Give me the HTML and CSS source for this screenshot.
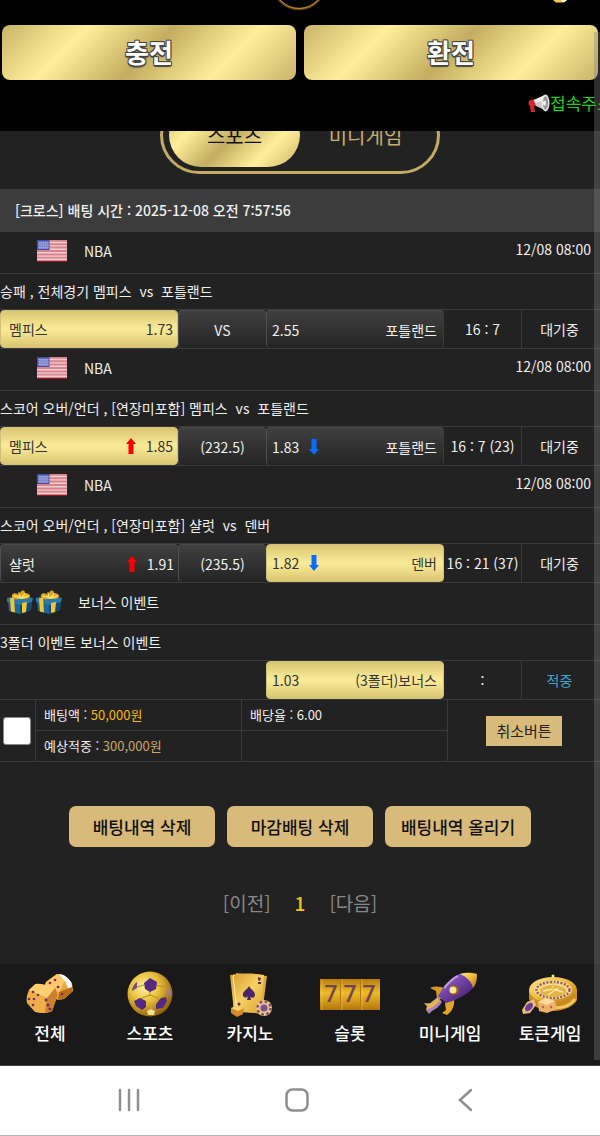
FILE: index.html
```html
<!DOCTYPE html>
<html lang="ko">

<head>
    <meta charset="UTF-8">
    <meta name="viewport" content="width=device-width, initial-scale=1.0">
    <title>배팅내역</title>
    <link rel="stylesheet" href="styles.css">
</head>

<body>
    <svg class="defs" aria-hidden="true">
        <defs>
            <linearGradient id="gold" x1="0" y1="0" x2="1" y2="1">
                <stop offset="0" stop-color="#ffe58a"/>
                <stop offset=".5" stop-color="#efb93a"/>
                <stop offset="1" stop-color="#b56f12"/>
            </linearGradient>
            <linearGradient id="cardGold" x1="0" y1="0" x2="1" y2="1">
                <stop offset="0" stop-color="#d9982c"/>
                <stop offset=".5" stop-color="#f6d063"/>
                <stop offset="1" stop-color="#dca336"/>
            </linearGradient>
            <radialGradient id="ballGold" cx=".38" cy=".35" r=".7">
                <stop offset="0" stop-color="#fff3a8"/>
                <stop offset=".45" stop-color="#e9c23c"/>
                <stop offset="1" stop-color="#8c5a08"/>
            </radialGradient>
            <linearGradient id="reel" x1="0" y1="0" x2="0" y2="1">
                <stop offset="0" stop-color="#b87c0c"/>
                <stop offset=".45" stop-color="#edbb28"/>
                <stop offset="1" stop-color="#b4760c"/>
            </linearGradient>
            <linearGradient id="violet" x1="0" y1="0" x2="1" y2="1">
                <stop offset="0" stop-color="#a673d6"/>
                <stop offset=".5" stop-color="#6a3c9e"/>
                <stop offset="1" stop-color="#35195c"/>
            </linearGradient>
            <symbol id="flag" viewBox="0 0 30 22">
                <rect width="30" height="22" fill="#d9828c"/>
                <path d="M0 2.500h30M0 5.900h30M0 9.300h30M0 12.700h30M0 16.100h30M0 19.300h30" stroke="#f0cdd1" stroke-width="1.400"/>
                <path d="M0 21.500h30" stroke="#8e1722"/>
                <rect width="12.500" height="10" fill="#4450a8"/>
                <rect x="1.500" y="1.500" width="10" height="7.500" fill="#8289cb"/>
                <path d="M1.500 2.500h10M1.500 5h10M1.500 7.500h10" stroke="#a6addb" stroke-dasharray="1.400 .8"/>
            </symbol>
            <symbol id="gift" viewBox="0 0 28 24">
                <path d="M2 10l24-1-1 11-11 4L3 21z" fill="#1c6699"/>
                <path d="M14 12l12-3-1 11-11 4z" fill="#124a75"/>
                <path d="M1 8l12-3 14 3-1 4-12 3L1 12z" fill="#2a7aa9"/>
                <path d="M4 8.500l4-1 1 15-4-1zM16 13l5-1-1 10-4 1z" fill="#f5c62f"/>
                <path d="M13 9C8 10 5 8 6 5s6-2 8 1C13 0 19-1 19 3c6 0 7 5 1 6z" fill="#e5a31e"/>
                <path d="M8 6l5 1M13 3l1 5M19 4l-4 4M22 6l-6 2" stroke="#ffe36b" stroke-width="1.400" stroke-linecap="round"/>
            </symbol>
            <symbol id="up" viewBox="0 0 10 16">
                <path d="M5 0l5 6H7.500v10h-5V6H0z" fill="#f00"/>
            </symbol>
            <symbol id="down" viewBox="0 0 10 16">
                <path d="M5 16l5-6H7.500V0h-5v10H0z" fill="#0a6cff"/>
            </symbol>
        </defs>
    </svg>

    <header class="header">
        <div class="logoBar">
            <svg class="logo" viewBox="0 0 50 25" aria-hidden="true">
                <circle cx="24" cy="-17" r="26" fill="none" stroke="#6b4714" stroke-width="2.500"/>
                <circle cx="24" cy="-17" r="25.500" fill="none" stroke="#c08a3c"/>
            </svg>
            <svg class="coin" viewBox="0 0 14 25" aria-hidden="true">
                <path d="M0 0h14l-3 2.500H3z" fill="#f5c94d"/>
                <path d="M9 0h5l-3 2H9z" fill="#fff"/>
            </svg>
        </div>
        <div class="money">
            <button type="button">충전</button>
            <button type="button">환전</button>
        </div>
        <div class="notice">
            <svg viewBox="0 0 22 20" aria-hidden="true">
                <path d="M2 7l6-1 1 7H6l1 6H3L2 13C0 12 0 8 2 7z" fill="#d8232a"/>
                <path d="M6 7L17 2l2 16-11-5z" fill="#c9c9c9"/>
                <path d="M6 7L17 2v5L7 10z" fill="#efefef"/>
                <ellipse cx="17.500" cy="10" rx="4" ry="8.500" fill="#e6e6e6"/>
                <ellipse cx="17.500" cy="10" rx="2.600" ry="6.800" fill="#9b9b9b"/>
                <ellipse cx="16.500" cy="10" rx="1.500" ry="2.500" fill="#eee"/>
            </svg>
            <span>접속주소</span>
        </div>
    </header>

    <main class="main">
        <div class="tabs">
            <button type="button" class="active">스포츠</button>
            <button type="button">미니게임</button>
        </div>

        <h1 class="betTime">[크로스] 배팅 시간 : 2025-12-08 오전 7:57:56</h1>

        <table class="bets">
            <colgroup>
                <col>
                <col class="colLine">
                <col>
                <col class="colScore">
                <col class="colScore">
            </colgroup>
            <tbody>
                <tr class="league">
                    <td colspan="5">
                        <div class="leagueRow">
                            <svg class="flag" aria-hidden="true"><use href="#flag"/></svg>
                            <span>NBA</span>
                            <time>12/08 08:00</time>
                        </div>
                    </td>
                </tr>
                <tr class="match">
                    <td colspan="5">승패 , 전체경기 멤피스 &nbsp;vs&nbsp; 포틀랜드</td>
                </tr>
                <tr class="odds">
                    <td><div class="odd picked"><span>멤피스</span><b>1.73</b></div></td>
                    <td><div class="odd line">VS</div></td>
                    <td><div class="odd away"><b>2.55</b><span>포틀랜드</span></div></td>
                    <td>16 : 7</td>
                    <td>대기중</td>
                </tr>
                <tr class="league">
                    <td colspan="5">
                        <div class="leagueRow">
                            <svg class="flag" aria-hidden="true"><use href="#flag"/></svg>
                            <span>NBA</span>
                            <time>12/08 08:00</time>
                        </div>
                    </td>
                </tr>
                <tr class="match">
                    <td colspan="5">스코어 오버/언더 , [연장미포함] 멤피스 &nbsp;vs&nbsp; 포틀랜드</td>
                </tr>
                <tr class="odds">
                    <td><div class="odd picked"><span>멤피스</span><svg class="arrow" aria-hidden="true"><use href="#up"/></svg><b>1.85</b></div></td>
                    <td><div class="odd line">(232.5)</div></td>
                    <td><div class="odd away"><b>1.83</b><svg class="arrow" aria-hidden="true"><use href="#down"/></svg><span>포틀랜드</span></div></td>
                    <td>16 : 7 (23)</td>
                    <td>대기중</td>
                </tr>
                <tr class="league">
                    <td colspan="5">
                        <div class="leagueRow">
                            <svg class="flag" aria-hidden="true"><use href="#flag"/></svg>
                            <span>NBA</span>
                            <time>12/08 08:00</time>
                        </div>
                    </td>
                </tr>
                <tr class="match">
                    <td colspan="5">스코어 오버/언더 , [연장미포함] 샬럿 &nbsp;vs&nbsp; 덴버</td>
                </tr>
                <tr class="odds">
                    <td><div class="odd"><span>샬럿</span><svg class="arrow" aria-hidden="true"><use href="#up"/></svg><b>1.91</b></div></td>
                    <td><div class="odd line">(235.5)</div></td>
                    <td><div class="odd away picked"><b>1.82</b><svg class="arrow" aria-hidden="true"><use href="#down"/></svg><span>덴버</span></div></td>
                    <td>16 : 21 (37)</td>
                    <td>대기중</td>
                </tr>
                <tr class="league">
                    <td colspan="5">
                        <div class="leagueRow bonus">
                            <svg class="gift" aria-hidden="true"><use href="#gift"/></svg>
                            <svg class="gift" aria-hidden="true"><use href="#gift"/></svg>
                            <span>보너스 이벤트</span>
                        </div>
                    </td>
                </tr>
                <tr class="match">
                    <td colspan="5">3폴더 이벤트 보너스 이벤트</td>
                </tr>
                <tr class="odds">
                    <td colspan="2"></td>
                    <td><div class="odd away picked"><b>1.03</b><span>(3폴더)보너스</span></div></td>
                    <td>:</td>
                    <td class="win">적중</td>
                </tr>
            </tbody>
        </table>

        <table class="summary">
            <colgroup>
                <col class="colCheck">
                <col>
                <col>
                <col class="colCancel">
            </colgroup>
            <tbody>
                <tr>
                    <td rowspan="2" class="check"><input type="checkbox" aria-label="배팅 선택"></td>
                    <td>배팅액 : <span class="amount">50,000원</span></td>
                    <td>배당율 : 6.00</td>
                    <td rowspan="2" class="cancel"><button type="button">취소버튼</button></td>
                </tr>
                <tr>
                    <td>예상적중 : <span class="expect">300,000원</span></td>
                    <td></td>
                </tr>
            </tbody>
        </table>

        <div class="actions">
            <button type="button">배팅내역 삭제</button>
            <button type="button">마감배팅 삭제</button>
            <button type="button">배팅내역 올리기</button>
        </div>

        <nav class="paging" aria-label="페이지">
            <a href="#">[이전]</a>
            <a href="#" class="active">1</a>
            <a href="#">[다음]</a>
        </nav>
    </main>

    <nav class="menu" aria-label="메뉴">
        <a href="#">
            <svg viewBox="0 0 60 48" aria-hidden="true">
                <path d="M37 4L26 12l-2 11 14 7 6-1 9-8-1-8-8-8z" fill="#eda63f"/>
                <path d="M37 4L26 12l-1 3 14 8 6-13z" fill="#ffc768"/>
                <path d="M38 4c5 0 10 3 13 8l1 5-4 2c-1-6-5-11-10-15z" fill="#fff"/>
                <path d="M39 22l13-5v5l-9 7-5 1z" fill="#b96c1c"/>
                <path d="M15 14c6 0 14 2 20 4 2 3 3 6 2 9l-5 14c-5 3-13 2-17 1L7 33c-1-4 0-9 2-13z" fill="#f0ae4a"/>
                <path d="M16 14c6-1 13 2 19 4l-7 10L9 20z" fill="#ffd071"/>
                <path d="M27 28l8-10c2 3 3 6 2 9l-5 14-7 2z" fill="#cc7f2c"/>
                <g fill="#6b2f63">
                    <circle cx="13" cy="22" r="1.300"/>
                    <circle cx="18" cy="25" r="1.300"/>
                    <circle cx="9" cy="29" r="1.300"/>
                    <circle cx="14" cy="29" r="1.300"/>
                    <circle cx="13" cy="35" r="1.300"/>
                    <circle cx="26" cy="30" r="1.500"/>
                    <circle cx="28" cy="35" r="1.500"/>
                    <circle cx="30" cy="39" r="1.500"/>
                    <circle cx="35" cy="10" r="1.300"/>
                    <circle cx="30" cy="13" r="1.300"/>
                    <circle cx="38" cy="17" r="1.300"/>
                    <circle cx="42" cy="24" r="1.200"/>
                </g>
            </svg>
            <span>전체</span>
        </a>
        <a href="#">
            <svg viewBox="0 0 60 48" aria-hidden="true">
                <circle cx="30" cy="24" r="22.500" fill="url(#ballGold)"/>
                <path d="M30 20v6M22 28l8-3 8 3M22 28l-2 4M38 28l2 4M17 17l7-2M43 17l-7-2" fill="none" stroke="#b98a1a"/>
                <path d="M24 13l6-5 7 4-1 7-6 3-5-3z" fill="#542a80"/>
                <path d="M12 21c0-4 3-8 5-9l0 6z" fill="#7a4b8e"/>
                <path d="M14 31l6-3 6 3 0 6-4 3-6-4z" fill="#542a80"/>
                <path d="M36 34l5-6 5-1 1 4-4 7-7 1z" fill="#542a80"/>
                <path d="M47 17c3 1 4 5 4 9l-3-2z" fill="#a07aa0"/>
                <path d="M27 41l4-2 4 2-1 4h-6z" fill="#f4dc9a"/>
            </svg>
            <span>스포츠</span>
        </a>
        <a href="#">
            <svg viewBox="0 0 60 48" aria-hidden="true">
                <path d="M16 3l31 3-5 38-29-4z" fill="#d9a843"/>
                <path d="M10 5c11-2 22-2 34 0l-3 37c-8 1-16 1-27-1z" fill="url(#cardGold)"/>
                <path d="M15 5l-2 1 4 34" fill="none" stroke="#fff0ae"/>
                <path d="M29 16c2 4 6 5 6 9 0 3-4 4-5 1l1 4h-4l1-4c-2 3-6 1-5-2 0-3 5-5 6-8z" fill="#4c2467"/>
                <path d="M38 7l3 1-1 3-2-1zM38 12h3v2h-3z" fill="#5a3158"/>
                <path d="M11 38l6-2 7 2-1 6-6 3-6-4z" fill="#d78b27"/>
                <path d="M11 38l6-2 7 2-6 3z" fill="#ffd178"/>
                <circle cx="19" cy="34" r="1.500" fill="#672e55"/>
                <circle cx="44" cy="38" r="8" fill="#f1c577"/>
                <circle cx="44" cy="38" r="6.500" fill="none" stroke="#7c4b82" stroke-width="2.500" stroke-dasharray="2.500 2.600"/>
                <circle cx="44" cy="38" r="5" fill="#e8c08d"/>
                <circle cx="44" cy="38" r="3.500" fill="#775092"/>
            </svg>
            <span>카지노</span>
        </a>
        <a href="#">
            <svg viewBox="0 0 60 48" aria-hidden="true">
                <rect y="9" width="60" height="31" fill="url(#reel)"/>
                <path d="M20.500 9v31M40.500 9v31" stroke="#b07a10"/>
                <path d="M2 9v31M22 9v31M42 9v31" stroke="#ffe36c" opacity=".4"/>
                <g class="seven" text-anchor="middle">
                    <text x="11" y="32">7</text>
                    <text x="30" y="32">7</text>
                    <text x="49" y="32">7</text>
                </g>
            </svg>
            <span>슬롯</span>
        </a>
        <a href="#">
            <svg viewBox="0 0 60 48" aria-hidden="true">
                <path d="M25 19c-5-3-10-3-15-1l6 3 1 8 6 0z" fill="#d39a2b"/>
                <path d="M34 28c1 6-1 13-7 17l-5-2 4-3-1-7z" fill="#e5a52d"/>
                <path d="M18 27l4 5c-2 4-6 7-10 9l-3 3-3-4 2-3-3-3 5-1z" fill="#a883b8"/>
                <path d="M17 28l3 3-7 6-7 3 1-4-3-3 6 1z" fill="#e8b650"/>
                <path d="M39 4c6-1 12-1 18 0 0 6-1 11-4 14-7 7-16 12-27 15l-8-7c5-9 12-17 21-22z" fill="url(#violet)"/>
                <path d="M40 4c6-2 12-1 17 0 0 6-1 10-4 14C52 12 47 7 40 4z" fill="url(#gold)"/>
                <path d="M24 18c5-6 9-10 14-12" fill="none" stroke="#c49be5" stroke-width="2"/>
                <circle cx="34" cy="20" r="5" fill="#9a5e18"/>
                <circle cx="33" cy="20" r="3.500" fill="#fbe7a0"/>
            </svg>
            <span>미니게임</span>
        </a>
        <a href="#">
            <svg viewBox="0 0 60 48" aria-hidden="true">
                <path d="M9 20v9c4 8 12 12 24 12s22-6 24-11V20z" fill="#c78a25"/>
                <path d="M34 38c10 0 17-3 21-9" fill="none" stroke="#f3c75c" stroke-width="3"/>
                <ellipse cx="33" cy="20" rx="24" ry="13" fill="url(#gold)"/>
                <ellipse cx="33" cy="20" rx="19" ry="9.500" fill="#f7dc8b"/>
                <ellipse cx="33" cy="20" rx="16.500" ry="8" fill="none" stroke="#96596a" stroke-width="2.500" stroke-dasharray="2 1.500"/>
                <ellipse cx="33" cy="21" rx="13" ry="6" fill="#e2b347"/>
                <path d="M23 21l10-2 10 3M28 25l10-7" fill="none" stroke="#ffeaa0" stroke-width="1.500"/>
                <path d="M32 20V7h2v13z" fill="#f1ca5b"/>
                <circle cx="33" cy="6" r="1.500" fill="#ffe48b"/>
                <path d="M18 32l8-4 9 3 2 8-10 4-8-2z" fill="#efb267"/>
                <path d="M18 32l8-4 9 3-8 4z" fill="#ffdba0"/>
                <path d="M2 40l5-8 7-3 2 6-6 8-7 1z" fill="#e9bd79"/>
                <ellipse cx="9" cy="37" rx="3" ry="5" fill="#6c3d98" transform="rotate(40 9 37)"/>
                <circle cx="23" cy="37" r="1.200" fill="#b06a55"/>
                <circle cx="31" cy="37" r="1.200" fill="#b06a55"/>
            </svg>
            <span>토큰게임</span>
        </a>
    </nav>

    <footer class="system">
        <button type="button" aria-label="최근 앱">
            <svg viewBox="0 0 24 24"><path d="M3 2v20M12 2v20M21 2v20" stroke-width="2.500"/></svg>
        </button>
        <button type="button" aria-label="홈">
            <svg viewBox="0 0 24 24"><rect x="1.500" y="1.500" width="21" height="21" rx="6" stroke-width="2.500"/></svg>
        </button>
        <button type="button" aria-label="뒤로">
            <svg viewBox="0 0 24 24"><path d="M18 2L7 12l11 10" stroke-width="2.500"/></svg>
        </button>
    </footer>

    <div class="scrollbar"></div>
</body>

</html>
```
FILE: styles.css
```css
* {
    padding: 0;
    margin: 0;
    box-sizing: border-box;
}

body {
    display: flex;
    flex-direction: column;
    min-height: 100vh;
    background-color: #222;
    color: #f0f0f0;
    font-family: "Noto Sans CJK KR", sans-serif;
    font-size: 14px;
    line-height: 20px;
    overflow-x: hidden;
}

button {
    border: 0;
    font-family: inherit;
    cursor: pointer;
}

a {
    color: inherit;
    text-decoration: none;
}

svg {
    display: block;
    flex: none;
}

.defs {
    position: absolute;
    width: 0;
    height: 0;
}

/* header */
.header {
    position: sticky;
    top: 0;
    z-index: 2;
    height: 131px;
    background-color: #000;
    overflow: hidden;
}

.logoBar {
    display: grid;
    grid-template-columns: 1fr 50px 1fr;
    height: 25px;
}

.logoBar .logo {
    grid-column: 2;
    width: 50px;
    height: 25px;
}

.logoBar .coin {
    width: 14px;
    height: 25px;
    justify-self: end;
    margin-right: 33px;
}

.money {
    display: flex;
    gap: 8px;
    padding: 0 2px;
}

.money button {
    flex: 1;
    height: 55px;
    padding-bottom: 2px;
    border-radius: 8px;
    background: linear-gradient(135deg, #c9b468 0%, #ffef9c 25%, #c3ad60 50%, #ffef9c 75%, #c9b468 100%);
    color: #fff;
    font-size: 26px;
    font-weight: 700;
    text-shadow: -1px -1px 0 #444, 1px -1px 0 #444, -1px 1px 0 #444, 1px 1px 0 #444, 0 2px 1px #444;
}

.notice {
    display: flex;
    align-items: center;
    height: 46px;
    padding-left: 88%;
    color: #1fd01f;
    font-size: 17px;
    white-space: nowrap;
}

.notice svg {
    width: 22px;
    height: 20px;
}

/* tabs slide under the header when scrolled */
.main {
    flex: 1;
}

.tabs {
    display: flex;
    width: 280px;
    height: 78px;
    margin: -35px auto 15px;
    padding: 4px 6px;
    border: 3px solid #c2ab62;
    border-radius: 39px;
}

.tabs button {
    flex: 1;
    border-radius: 32px;
    background: none;
    color: #c9ae6c;
    font-size: 20px;
}

.tabs .active {
    background: linear-gradient(135deg, #c9b468 0%, #ffef9c 25%, #c3ad60 50%, #ffef9c 75%, #c9b468 100%);
    color: #111;
}

.betTime {
    height: 43px;
    padding-left: 15px;
    background-color: #3c3c3c;
    font-size: 14px;
    font-weight: 500;
    line-height: 43px;
}

/* bets */
table {
    width: 100%;
    table-layout: fixed;
    border-collapse: separate;
    border-spacing: 0;
}

.colLine {
    width: 88px;
}

.colScore {
    width: 78px;
}

.league td {
    height: 42px;
    border-bottom: 1px solid #3a3a3a;
}

.leagueRow {
    display: flex;
    align-items: center;
    padding: 0 9px 4px 37px;
}

.flag {
    width: 30px;
    height: 22px;
    margin-right: 17px;
}

.leagueRow time {
    margin-left: auto;
    padding-bottom: 4px;
}

.bonus {
    gap: 1px;
    padding-left: 6px;
}

.gift {
    width: 28px;
    height: 24px;
}

.bonus span {
    margin-left: 14px;
}

.match td {
    height: 36px;
    padding-bottom: 2px;
    border-bottom: 1px solid #3a3a3a;
    white-space: nowrap;
}

.odds td {
    height: 39px;
    border-bottom: 1px solid #3a3a3a;
    text-align: center;
    white-space: nowrap;
}

.odds td:nth-last-child(2) {
    border-right: 1px solid #3a3a3a;
}

.odds td:last-child {
    padding-right: 3px;
}

.odds .win {
    color: #3fa7d0;
}

.odd {
    display: flex;
    align-items: center;
    gap: 10px;
    height: 38px;
    padding: 0 4px 0 8px;
    border-left: 1px solid #505050;
    border-top: 1px solid #4a4a4a;
    border-radius: 4px;
    background: linear-gradient(#404040, #242424);
}

.odd b {
    font-weight: 400;
}

.odd span {
    margin-right: auto;
}

.odd.away {
    padding: 0 6px 0 5px;
    border-right: 1px solid #3a3a3a;
}

.odd.away span {
    margin: 0 0 0 auto;
}

.odd.line {
    justify-content: center;
    padding: 0;
}

.odd.picked {
    border: 1px solid #d2bf78;
    background: linear-gradient(#d9c673, #fbeb98 50%, #d9c673);
    color: #333;
}

.arrow {
    width: 10px;
    height: 16px;
}

/* totals */
.colCheck {
    width: 36px;
}

.colCancel {
    width: 152px;
}

.summary td {
    height: 31px;
    padding-left: 8px;
    border-right: 1px solid #3a3a3a;
    border-bottom: 1px solid #3a3a3a;
    font-size: 13px;
}

.summary .check {
    padding-left: 3px;
}

.summary .check input {
    display: block;
    appearance: none;
    width: 28px;
    height: 28px;
    border: 1px solid #8a8a8a;
    border-radius: 3px;
    background-color: #fff;
}

.summary .cancel {
    padding: 0;
    border-right: 0;
    text-align: center;
}

.cancel button {
    height: 30px;
    padding: 0 10px;
    background-color: #d8ba7b;
    color: #222;
    font-size: 15px;
}

.amount {
    color: #f5b90f;
}

.expect {
    color: #c9a86c;
}

.actions {
    display: flex;
    justify-content: center;
    gap: 12px;
    margin-top: 44px;
}

.actions button {
    width: 146px;
    height: 41px;
    border-radius: 7px;
    background-color: #d8ba7b;
    color: #111;
    font-size: 17px;
    font-weight: 500;
}

.paging {
    display: flex;
    justify-content: center;
    gap: 24px;
    padding: 42px 0;
    color: #888;
    font-size: 19px;
    line-height: 28px;
}

.paging .active {
    color: #f5c211;
    font-weight: 500;
}

/* bottom menu */
.menu {
    display: flex;
    height: 102px;
    padding-top: 6px;
    background-color: #191919;
    border-bottom: 1px solid #444;
}

.menu a {
    display: flex;
    flex: 1;
    flex-direction: column;
    align-items: center;
    gap: 5px;
    color: #fff;
    font-size: 17px;
    font-weight: 500;
}

.menu svg {
    width: 60px;
    height: 48px;
}

.seven {
    fill: #734350;
    font-family: Roboto, sans-serif;
    font-size: 23px;
    font-weight: 500;
}

.system {
    display: grid;
    grid-template-columns: repeat(3, 168px);
    justify-content: center;
    height: 70px;
    padding: 0 6px 2px 0;
    background-color: #fff;
    border-bottom: 1px solid #b5b5b5;
}

.system button {
    display: flex;
    align-items: center;
    justify-content: center;
    background: none;
}

.system svg {
    width: 24px;
    height: 24px;
    fill: none;
    stroke: #8f8f8f;
    stroke-linecap: round;
}

.scrollbar {
    position: fixed;
    top: 32px;
    right: 0;
    bottom: 76px;
    z-index: 3;
    width: 6px;
    background-color: rgba(128, 128, 128, .35);
}
```
